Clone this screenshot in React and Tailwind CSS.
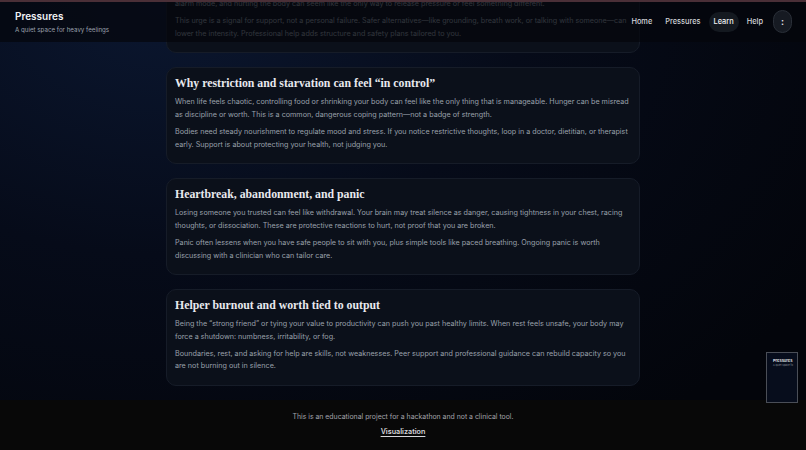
import React from "react";

const navItems = [
  { label: "Home" },
  { label: "Pressures" },
  { label: "Learn", active: true },
  { label: "Help" },
];

const topics = [
  {
    title: "Why restriction and starvation can feel \u201cin control\u201d",
    paras: [
      "When life feels chaotic, controlling food or shrinking your body can feel like the only thing that is manageable. Hunger can be misread as discipline or worth. This is a common, dangerous coping pattern\u2014not a badge of strength.",
      "Bodies need steady nourishment to regulate mood and stress. If you notice restrictive thoughts, loop in a doctor, dietitian, or therapist early. Support is about protecting your health, not judging you.",
    ],
  },
  {
    title: "Heartbreak, abandonment, and panic",
    paras: [
      "Losing someone you trusted can feel like withdrawal. Your brain may treat silence as danger, causing tightness in your chest, racing thoughts, or dissociation. These are protective reactions to hurt, not proof that you are broken.",
      "Panic often lessens when you have safe people to sit with you, plus simple tools like paced breathing. Ongoing panic is worth discussing with a clinician who can tailor care.",
    ],
  },
  {
    title: "Helper burnout and worth tied to output",
    paras: [
      "Being the \u201cstrong friend\u201d or tying your value to productivity can push you past healthy limits. When rest feels unsafe, your body may force a shutdown: numbness, irritability, or fog.",
      "Boundaries, rest, and asking for help are skills, not weaknesses. Peer support and professional guidance can rebuild capacity so you are not burning out in silence.",
    ],
  },
];

const sans = "font-['Inter','Noto_Sans',sans-serif]";

function Card({ title, paras }) {
  return (
    <section className="shrink-0 rounded-[10px] border border-[#161c28] bg-[#0b101a] pl-2 pr-[3px] pt-[5px] pb-[12px]">
      {title && (
        <h2 className="font-['Liberation_Serif','DejaVu_Serif',serif] text-[11.8px] font-bold leading-[20px] text-[#e8e9ee]">
          {title}
        </h2>
      )}
      <div className={`flex flex-col gap-[4.5px] ${title ? "mt-[3px]" : ""}`}>
        {paras.map((p, i) => (
          <p key={i} className={`${sans} text-[7.2px] leading-[12.6px] text-[#9aa0ab]`}>
            {p}
          </p>
        ))}
      </div>
    </section>
  );
}

export default function App() {
  return (
    <div className={`relative h-[450px] w-[806px] overflow-hidden bg-[#050913] ${sans}`}>
      <div className="flex h-full flex-col bg-[radial-gradient(ellipse_at_20%_0%,#0b1730_0%,#060b19_40%,#03050b_85%)]">
        {/* scrolled content: anchored to the bottom of the viewport */}
        <main className="flex min-h-0 flex-1 flex-col justify-end overflow-hidden pb-[14px]">
          <div className="mx-auto flex w-[474px] flex-col gap-[14px]">
            <Card
              paras={[
                <>
                  Self-harm can feel like a release when emotions are overwhelming. Your nervous system may be stuck in
                  <br />
                  alarm mode, and hurting the body can seem like the only way to release pressure or feel something different.
                </>,
                "This urge is a signal for support, not a personal failure. Safer alternatives\u2014like grounding, breath work, or talking with someone\u2014can lower the intensity. Professional help adds structure and safety plans tailored to you.",
              ]}
            />
            {topics.map((t) => (
              <Card key={t.title} title={t.title} paras={t.paras} />
            ))}
          </div>
        </main>

        <footer className="flex h-[50px] shrink-0 flex-col items-center justify-center gap-[5px] bg-[#080808]">
          <p className="text-[6.9px] text-[#a3a3aa]">
            This is an educational project for a hackathon and not a clinical tool.
          </p>
          <a className="text-[7.2px] font-semibold text-[#d6d6db] underline underline-offset-2">Visualization</a>
        </footer>
      </div>

      {/* fixed header over scrolled content */}
      <header className="absolute inset-x-0 top-0 flex h-[42px] items-start justify-between border-t-2 border-[#4a2f37] bg-[#04060c]/70 pl-[15px] pr-[14px]">
        <div className="pt-[8px]">
          <div className="text-[10px] font-semibold leading-[13px] text-[#f1f2f5]">Pressures</div>
          <div className="mt-[2px] text-[6.2px] leading-[10px] text-[#9ba1ad]">A quiet space for heavy feelings</div>
        </div>
        <nav className="flex items-center gap-[3px] pt-[8px]">
          {navItems.map((n) => (
            <span
              key={n.label}
              className={`rounded-full px-[5px] py-[5px] text-[7.4px] font-medium leading-[10px] ${
                n.active ? "bg-[#141920] text-[#f3f4f6]" : "text-[#d4d6db]"
              }`}
            >
              {n.label}
            </span>
          ))}
          <span className="ml-[2px] flex h-[23px] w-[19px] items-center justify-center rounded-full border border-[#2a2f38] bg-[#161a22] text-[9px] font-bold text-[#e5e7eb]">
            :
          </span>
        </nav>
      </header>

      {/* mini preview */}
      <div className="absolute left-[766px] top-[352px] h-[51px] w-[32px] overflow-hidden border border-[#4a4e57] bg-[#070d1c] px-[6px] pt-[5px]">
        <div className="text-[4px] font-semibold leading-[5px] text-[#e5e7eb]">Pressures</div>
        <div className="whitespace-nowrap text-[2.6px] leading-[4px] text-[#8a909b]">A quiet space fo</div>
      </div>
    </div>
  );
}
